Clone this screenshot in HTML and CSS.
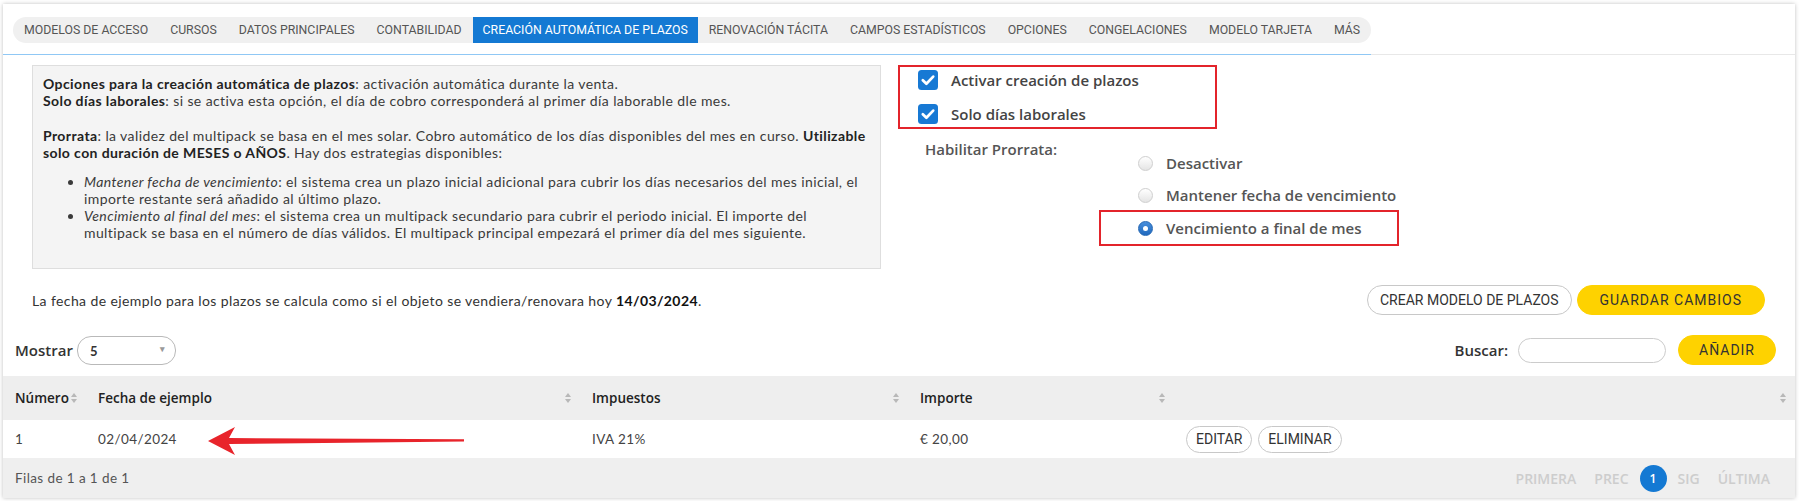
FILE: index.html
```html
<!DOCTYPE html>
<html>
<head>
    <meta charset="UTF-8">
    <title>Creación automática de plazos</title>
    <link rel="stylesheet" href="styles.css">
</head>
<body>
<div class="card">
    <div class="tabbar">
        <div class="tabbar-inner">
            <ul class="tabs">
                <li>Modelos de acceso</li>
                <li>Cursos</li>
                <li>Datos principales</li>
                <li>Contabilidad</li>
                <li class="active">Creación automática de plazos</li>
                <li>Renovación tácita</li>
                <li>Campos estadísticos</li>
                <li>Opciones</li>
                <li>Congelaciones</li>
                <li>Modelo tarjeta</li>
                <li>Más</li>
            </ul>
        </div>
    </div>

    <div class="content">
        <div class="top">
            <div class="info">
                <p><b>Opciones para la creación automática de plazos</b>: activación automática durante la venta.<br>
                    <b>Solo días laborales</b>: si se activa esta opción, el día de cobro corresponderá al primer día laborable dle mes.</p>
                <p><b>Prorrata</b>: la validez del multipack se basa en el mes solar. Cobro automático de los días disponibles del mes en curso. <b>Utilizable solo con duración de MESES o AÑOS</b>. Hay dos estrategias disponibles:</p>
                <ul>
                    <li><i>Mantener fecha de vencimiento</i>: el sistema crea un plazo inicial adicional para cubrir los días necesarios del mes inicial, el importe restante será añadido al último plazo.</li>
                    <li><i>Vencimiento al final del mes</i>: el sistema crea un multipack secundario para cubrir el periodo inicial. El importe del multipack se basa en el número de días válidos. El multipack principal empezará el primer día del mes siguiente.</li>
                </ul>
            </div>

            <div class="options">
                <div class="checks">
                    <label class="check">
                        <svg width="20" height="20" viewBox="0 0 20 20"><rect width="20" height="20" rx="3.5" fill="#1779d4"/><path d="M4.8 10.2 L8.4 13.8 L15.2 6.6" fill="none" stroke="#fff" stroke-width="2.7" stroke-linecap="round" stroke-linejoin="round"/></svg>
                        Activar creación de plazos
                    </label>
                    <label class="check">
                        <svg width="20" height="20" viewBox="0 0 20 20"><rect width="20" height="20" rx="3.5" fill="#1779d4"/><path d="M4.8 10.2 L8.4 13.8 L15.2 6.6" fill="none" stroke="#fff" stroke-width="2.7" stroke-linecap="round" stroke-linejoin="round"/></svg>
                        Solo días laborales
                    </label>
                </div>
                <div class="prorrata">
                    <span class="prorrata-label">Habilitar Prorrata:</span>
                    <ul class="radios">
                        <li><span class="radio"></span>Desactivar</li>
                        <li><span class="radio"></span>Mantener fecha de vencimiento</li>
                        <li class="marked"><span class="radio on"></span>Vencimiento a final de mes</li>
                    </ul>
                </div>
            </div>
        </div>

        <div class="date-row">
            <span>La fecha de ejemplo para los plazos se calcula como si el objeto se vendiera/renovara hoy <b>14/03/2024</b>.</span>
            <div class="btns">
                <button class="btn">Crear modelo de plazos</button>
                <button class="btn yellow">Guardar cambios</button>
            </div>
        </div>
    </div>

    <div class="search-row">
        <div class="show">
            <span class="lbl">Mostrar</span>
            <span class="select">5<i>&#9662;</i></span>
        </div>
        <div class="search">
            <span class="lbl">Buscar:</span>
            <span class="search-input"></span>
            <button class="btn yellow add">Añadir</button>
        </div>
    </div>

    <table class="grid">
        <colgroup>
            <col style="width:83px">
            <col style="width:494px">
            <col style="width:328px">
            <col style="width:266px">
            <col>
        </colgroup>
        <thead>
        <tr>
            <th><div class="th">Número<span class="sort"></span></div></th>
            <th><div class="th">Fecha de ejemplo<span class="sort"></span></div></th>
            <th><div class="th">Impuestos<span class="sort"></span></div></th>
            <th><div class="th">Importe<span class="sort"></span></div></th>
            <th><div class="th"><span></span><span class="sort"></span></div></th>
        </tr>
        </thead>
        <tbody>
        <tr>
            <td>1</td>
            <td>02/04/2024</td>
            <td>IVA 21%</td>
            <td>€ 20,00</td>
            <td><button class="btn small">Editar</button><button class="btn small">Eliminar</button></td>
        </tr>
        </tbody>
    </table>

    <div class="table-foot">
        <span>Filas de 1 a 1 de 1</span>
        <ul class="pager">
            <li>Primera</li>
            <li>Prec</li>
            <li class="current">1</li>
            <li>Sig</li>
            <li>Última</li>
        </ul>
    </div>

    <svg class="arrow" width="270" height="32" viewBox="0 0 270 32">
        <polygon points="2,16 29,2 23,13 258,14.2 258,16.4 23,19 29,30" fill="#e8242b"/>
    </svg>
</div>
</body>
</html>
```

FILE: styles.css
```css
* {
    box-sizing: border-box;
}

body {
    margin: 0;
    background: #fff;
    font-family: Lato, "Liberation Sans", sans-serif;
    color: #333;
}

.card {
    position: relative;
    margin: 4px 4px 3px 3px;
    background: #fff;
    box-shadow: 0 0 4px rgba(0, 0, 0, .25);
}

/* tabs */
.tabbar {
    display: flex;
    border-bottom: 1px solid #e8e8e8;
}
.tabbar-inner {
    padding: 13px 0 11px 10px;
    border-bottom: 1px solid #90c8f5;
    margin-bottom: -1px;
}
.tabs {
    display: flex;
    margin: 0;
    padding: 0;
    list-style: none;
    background: #f0f0f0;
    border-radius: 13px;
    font-family: Roboto, sans-serif;
    font-size: 12.3px;
    text-transform: uppercase;
    color: #555;
}
.tabs > li {
    padding: 0 11px;
    line-height: 26px;
    white-space: nowrap;
}
.tabs > li.active {
    background: #1479d3;
    color: #fff;
    padding: 0 10px;
}

/* top area */
.content {
    padding: 10px 30px 0 29px;
}
.top {
    display: flex;
    gap: 17px;
}
.info {
    width: 849px;
    flex: none;
    background: #f4f4f4;
    border: 1px solid #dedede;
    padding: 9px 10px 27px;
    font-size: 14px;
    letter-spacing: .4px;
    line-height: 17px;
    color: #3a3a3a;
}
.info p {
    margin: 0 0 18px;
}
.info p + p {
    margin: 0;
}
.info b {
    color: #222;
}
.info ul {
    margin: 12px 0 0;
    padding-left: 41px;
}

.options {
    flex: 1;
    font-family: "Open Sans", sans-serif;
    font-weight: 600;
    font-size: 15px;
}
.checks {
    width: 319px;
    border: 2px solid #e3242b;
    padding: 0 0 0 18px;
    display: flex;
    flex-direction: column;
    gap: 8px;
    color: #444;
}
.check {
    display: flex;
    align-items: center;
    gap: 13px;
    height: 26px;
}
.prorrata {
    display: flex;
    margin-top: 10px;
    padding-left: 27px;
    color: #555;
}
.prorrata-label {
    width: 174px;
    flex: none;
    line-height: 20px;
}
.radios {
    list-style: none;
    margin: 8px 0 0;
    padding: 0;
}
.radios > li {
    width: 300px;
    height: 32px;
    display: flex;
    align-items: center;
    padding-left: 39px;
}
.radios > li.marked {
    height: 36px;
    margin-top: -1px;
    border: 2px solid #e3242b;
    padding-left: 37px;
}
.radio {
    width: 15px;
    height: 15px;
    border-radius: 50%;
    border: 1px solid #cfcfcf;
    background: linear-gradient(#fff, #e4e4e4);
    margin-right: 13px;
    position: relative;
}
.radio.on {
    border-color: #2467b4;
    background: linear-gradient(#4a90dc, #1f68bd);
}
.radio.on::after {
    content: "";
    position: absolute;
    left: 4px;
    top: 4px;
    width: 5px;
    height: 5px;
    border-radius: 50%;
    background: #fff;
}

/* date row */
.date-row {
    display: flex;
    justify-content: space-between;
    align-items: center;
    margin-top: 16px;
    font-size: 14px;
    letter-spacing: .4px;
    color: #333;
}
.date-row b {
    color: #111;
}
.btns {
    display: flex;
    gap: 5px;
    letter-spacing: 0;
}
.btn {
    height: 30px;
    padding: 0 12px;
    border: 1px solid #c8c8c8;
    border-radius: 15px;
    background: #fff;
    font-family: Roboto, sans-serif;
    font-size: 14px;
    color: #333;
    text-transform: uppercase;
}
.btn.yellow {
    background: #fed200;
    border-color: #fed200;
    padding: 0 22px;
    letter-spacing: 1px;
}

/* search row */
.search-row {
    display: flex;
    justify-content: space-between;
    align-items: center;
    margin-top: 20px;
    padding: 0 19px 0 12px;
    height: 30px;
}
.show, .search {
    display: flex;
    align-items: center;
}
.lbl {
    font-family: "Open Sans", sans-serif;
    font-weight: 600;
    font-size: 15px;
    color: #333;
}
.select {
    margin-left: 4px;
    width: 99px;
    height: 29px;
    border: 1px solid #b9b9b9;
    border-radius: 14px;
    display: flex;
    align-items: center;
    justify-content: space-between;
    padding: 2px 10px 0 12px;
    font-size: 13px;
    font-weight: bold;
    color: #333;
}
.select i {
    font-style: normal;
    font-size: 9px;
    color: #999;
    margin-top: -6px;
}
.search-input {
    margin-left: 10px;
    width: 148px;
    height: 25px;
    border: 1px solid #ccc;
    border-radius: 13px;
}
.btn.add {
    margin-left: 12px;
    padding: 0 20px;
}

/* table */
.grid {
    width: 100%;
    margin-top: 11px;
    border-collapse: collapse;
    table-layout: fixed;
}
.grid th {
    height: 44px;
    background: #eee;
    padding: 0 8px 0 12px;
    font-family: "Open Sans", sans-serif;
    font-weight: 600;
    font-size: 13.5px;
    color: #222;
    text-align: left;
}
.th {
    display: flex;
    justify-content: space-between;
    align-items: center;
}
.sort {
    width: 7px;
    height: 10px;
    position: relative;
}
.sort::before, .sort::after {
    content: "";
    position: absolute;
    left: 0;
    border-left: 3.5px solid transparent;
    border-right: 3.5px solid transparent;
}
.sort::before {
    top: 0;
    border-bottom: 4px solid #b8b8b8;
}
.sort::after {
    bottom: 0;
    border-top: 4px solid #b8b8b8;
}
.grid td {
    height: 38px;
    padding: 0 12px;
    font-size: 13.5px;
    letter-spacing: .4px;
    color: #444;
}
.btn.small {
    height: 27px;
    padding: 0 9px;
    margin-right: 6px;
    border-radius: 14px;
    letter-spacing: 0;
}

.table-foot {
    height: 40px;
    background: #efefef;
    display: flex;
    justify-content: space-between;
    align-items: center;
    padding: 0 18px 0 12px;
    font-size: 13.5px;
    letter-spacing: .4px;
    color: #555;
}
.pager {
    display: flex;
    align-items: center;
    list-style: none;
    margin: 0;
    padding: 0;
    gap: 4px;
    font-family: "Open Sans", sans-serif;
    font-weight: 600;
    font-size: 14px;
    letter-spacing: 0;
    color: #cdcdcd;
    text-transform: uppercase;
}
.pager > li {
    padding: 0 7px;
}
.pager > li.current {
    width: 27px;
    height: 27px;
    padding: 0;
    border-radius: 50%;
    background: #1479d3;
    color: #fff;
    font-size: 12px;
    display: flex;
    align-items: center;
    justify-content: center;
}

/* annotation arrow over the table row */
.arrow {
    position: absolute;
    left: 203px;
    top: 421px;
}
```
